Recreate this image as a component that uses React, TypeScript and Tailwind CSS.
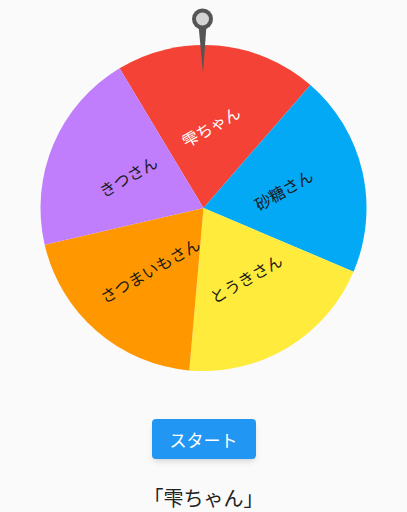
import React from 'react';

const CX = 203.5;
const CY = 208;
const R = 163;
const START = -31; // 最初のセグメントの開始角度（上から時計回り）

const items = [
  { name: '雫ちゃん', color: '#F44336', text: '#ffffff' },
  { name: '砂糖さん', color: '#03A9F4', text: '#1a1a1a' },
  { name: 'とうきさん', color: '#FFEB3B', text: '#1a1a1a' },
  { name: 'さつまいもさん', color: '#FF9800', text: '#1a1a1a' },
  { name: 'きつさん', color: '#C07EFC', text: '#1a1a1a' },
];

const pt = (deg: number, r: number) => {
  const a = (deg * Math.PI) / 180;
  return [CX + r * Math.sin(a), CY - r * Math.cos(a)];
};

function Wheel() {
  const step = 360 / items.length;
  return (
    <svg width={407} height={380} viewBox="0 0 407 380" className="block">
      {items.map((it, i) => {
        const a0 = START + step * i;
        const a1 = a0 + step;
        const [x0, y0] = pt(a0, R);
        const [x1, y1] = pt(a1, R);
        return (
          <path
            key={it.name}
            d={`M${CX} ${CY} L${x0} ${y0} A${R} ${R} 0 0 1 ${x1} ${y1} Z`}
            fill={it.color}
          />
        );
      })}
      {items.map((it, i) => {
        const mid = START + step * i + step / 2;
        const [x, y] = pt(mid, 82);
        return (
          <text
            key={it.name}
            x={x}
            y={y}
            fill={it.text}
            fontSize={16}
            fontFamily='"Noto Sans CJK JP", "Noto Sans", sans-serif'
            textAnchor="middle"
            dominantBaseline="central"
            transform={`rotate(-30 ${x} ${y})`}
          >
            {it.name}
          </text>
        );
      })}
      {/* ピン */}
      <path d="M198.5 25 L206.5 25 L203.2 71 L202.8 71 Z" fill="#555555" />
      <circle cx={202.5} cy={19} r={10.5} fill="#555555" />
      <circle cx={202.5} cy={19} r={6.5} fill="#d4d4d4" />
    </svg>
  );
}

export default function App() {
  return (
    <main
      className="min-h-screen w-[407px] h-[512px] overflow-hidden bg-[#fafafa] flex flex-col items-center"
      style={{ fontFamily: '"Noto Sans CJK JP", "Noto Sans", sans-serif' }}
    >
      <Wheel />
      <button className="mt-[39px] w-[104px] h-10 rounded bg-[#2196F3] text-white text-[17px] leading-none shadow-md">
        スタート
      </button>
      <div className="mt-[25px] text-[20px] leading-7 text-[#222222]">「雫ちゃん」</div>
    </main>
  );
}
